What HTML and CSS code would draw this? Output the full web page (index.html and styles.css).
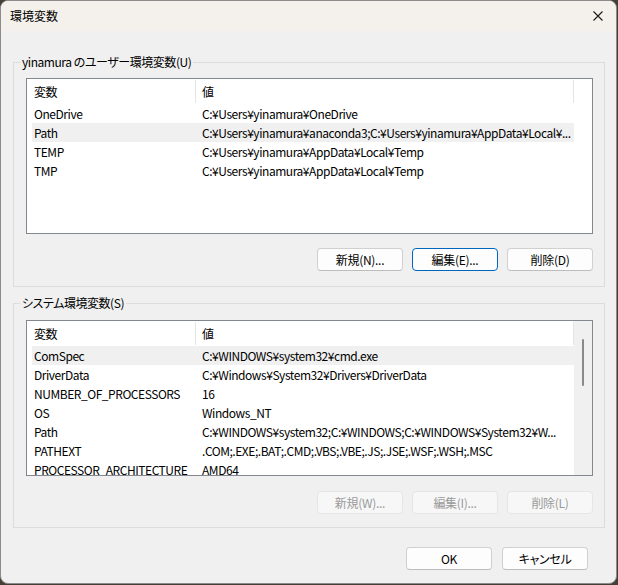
FILE: index.html
```html
<!DOCTYPE html>
<html lang="ja">
<head>
  <meta charset="UTF-8">
  <title>環境変数</title>
  <link rel="stylesheet" href="styles.css">
</head>
<body>
  <div class="env-window">
    <!-- Title bar -->
    <div class="env-titlebar">
      <span class="env-title">環境変数</span>
      <button class="env-close" aria-label="閉じる">
        <svg width="10" height="10" viewBox="0 0 10 10"><path d="M0.5 0.5 L9.5 9.5 M9.5 0.5 L0.5 9.5" stroke="#1a1a1a" stroke-width="1.1" fill="none"/></svg>
      </button>
    </div>

    <div class="env-body">
      <!-- User variables -->
      <fieldset class="env-group env-group-user">
        <legend>yinamura のユーザー環境変数(U)</legend>
        <div class="env-list env-list-user">
          <div class="env-rows">
            <div class="env-head">
              <div class="env-cell env-name">変数</div>
              <div class="env-cell env-value">値</div>
            </div>
            <div class="env-row"><div class="env-cell env-name">OneDrive</div><div class="env-cell env-value">C:¥Users¥yinamura¥OneDrive</div></div>
            <div class="env-row selected"><div class="env-cell env-name">Path</div><div class="env-cell env-value">C:¥Users¥yinamura¥anaconda3;C:¥Users¥yinamura¥AppData¥Local¥...</div></div>
            <div class="env-row"><div class="env-cell env-name">TEMP</div><div class="env-cell env-value">C:¥Users¥yinamura¥AppData¥Local¥Temp</div></div>
            <div class="env-row"><div class="env-cell env-name">TMP</div><div class="env-cell env-value">C:¥Users¥yinamura¥AppData¥Local¥Temp</div></div>
          </div>
          <div class="env-scroll-space"></div>
        </div>
        <div class="env-actions">
          <button class="env-btn">新規(N)...</button>
          <button class="env-btn focused">編集(E)...</button>
          <button class="env-btn">削除(D)</button>
        </div>
      </fieldset>

      <!-- System variables -->
      <fieldset class="env-group env-group-system">
        <legend>システム環境変数(S)</legend>
        <div class="env-list env-list-system">
          <div class="env-rows">
            <div class="env-head">
              <div class="env-cell env-name">変数</div>
              <div class="env-cell env-value">値</div>
            </div>
            <div class="env-row selected"><div class="env-cell env-name">ComSpec</div><div class="env-cell env-value">C:¥WINDOWS¥system32¥cmd.exe</div></div>
            <div class="env-row"><div class="env-cell env-name">DriverData</div><div class="env-cell env-value">C:¥Windows¥System32¥Drivers¥DriverData</div></div>
            <div class="env-row"><div class="env-cell env-name">NUMBER_OF_PROCESSORS</div><div class="env-cell env-value">16</div></div>
            <div class="env-row"><div class="env-cell env-name">OS</div><div class="env-cell env-value">Windows_NT</div></div>
            <div class="env-row"><div class="env-cell env-name">Path</div><div class="env-cell env-value">C:¥WINDOWS¥system32;C:¥WINDOWS;C:¥WINDOWS¥System32¥W...</div></div>
            <div class="env-row"><div class="env-cell env-name">PATHEXT</div><div class="env-cell env-value">.COM;.EXE;.BAT;.CMD;.VBS;.VBE;.JS;.JSE;.WSF;.WSH;.MSC</div></div>
            <div class="env-row"><div class="env-cell env-name">PROCESSOR_ARCHITECTURE</div><div class="env-cell env-value">AMD64</div></div>
          </div>
          <div class="env-scrollbar"><div class="env-thumb"></div></div>
        </div>
        <div class="env-actions">
          <button class="env-btn" disabled>新規(W)...</button>
          <button class="env-btn" disabled>編集(I)...</button>
          <button class="env-btn" disabled>削除(L)</button>
        </div>
      </fieldset>

      <!-- Dialog buttons -->
      <div class="env-footer">
        <button class="env-btn">OK</button>
        <button class="env-btn">キャンセル</button>
      </div>
    </div>
  </div>
</body>
</html>
```

FILE: styles.css
```css
/* Page / desktop behind the dialog */
html, body {
  margin: 0;
  padding: 0;
}

body {
  width: 618px;
  height: 585px;
  background: #463f37;
  font-family: "Noto Sans CJK JP", "Noto Sans", sans-serif;
  font-size: 12px;
  font-feature-settings: "palt";
  letter-spacing: -0.45px;
  color: #000;
  overflow: hidden;
}

/* Dialog window */
.env-window {
  box-sizing: border-box;
  width: 617px;
  height: 584px;
  border: 1px solid #8c8c8c;
  border-radius: 8px;
  background: #f0f0f0;
  overflow: hidden;
  display: flex;
  flex-direction: column;
}

/* Title bar */
.env-titlebar {
  height: 30px;
  flex: none;
  background: #f4f1ec;
  display: flex;
  align-items: center;
  justify-content: space-between;
  padding: 0 10px 0 9px;
}

.env-title {
  line-height: 16px;
  font-feature-settings: normal;
  letter-spacing: 0;
}

.env-close {
  border: none;
  background: none;
  padding: 0;
  width: 10px;
  height: 10px;
  margin-right: 3px;
  display: flex;
}

.env-body {
  padding: 0 11px 0 12px;
}

/* Group boxes */
.env-group {
  margin: 0;
  border: 1px solid #dcdcdc;
  padding: 0 11px 15px 12px;
}

.env-group legend {
  margin-left: -6px;
  padding: 0 2px;
  line-height: 16px;
}

.env-group-user {
  margin-top: 23px;
}

.env-group-system {
  margin-top: 8px;
  padding-bottom: 13px;
}

/* List views */
.env-list {
  box-sizing: border-box;
  border: 1px solid #828790;
  background: #fff;
  display: grid;
  grid-template-columns: 1fr 18px;
  overflow: hidden;
}

.env-list-user {
  margin-top: 8px;
  height: 156px;
}

.env-list-system {
  margin-top: 9px;
  height: 156px;
}

.env-rows {
  padding-left: 5px;
  overflow: hidden;
}

.env-head,
.env-row {
  display: grid;
  grid-template-columns: 164px 1fr;
}

.env-head {
  padding: 1px 0;
}

.env-head .env-cell {
  height: 23px;
  line-height: 23px;
  border-right: 1px solid #e5e5e5;
}

.env-row {
  height: 19px;
  line-height: 19px;
}

.env-row.selected {
  background: #f0f0f0;
}

.env-cell {
  white-space: nowrap;
  overflow: hidden;
  box-sizing: border-box;
}

.env-name {
  padding-left: 2px;
}

.env-value {
  padding-left: 6px;
}

/* Vertical scrollbar (system list) */
.env-scrollbar {
  background: #f0f0f0;
  position: relative;
}

.env-thumb {
  position: absolute;
  left: 8px;
  top: 18px;
  width: 2px;
  height: 47px;
  border-radius: 1px;
  background: #8a8a8a;
}

/* Buttons */
.env-actions {
  display: flex;
  justify-content: flex-end;
  gap: 9px;
  margin-top: 14px;
}

.env-group-system .env-actions {
  margin-top: 15px;
}

.env-btn {
  box-sizing: border-box;
  width: 86px;
  height: 23px;
  padding: 0;
  font-family: inherit;
  font-size: 12px;
  font-feature-settings: "palt";
  letter-spacing: -0.3px;
  color: #000;
  background: #fdfdfd;
  border: 1px solid #d0d0d0;
  border-bottom-color: #bdbdbd;
  border-radius: 4px;
}

.env-btn.focused {
  border: 1px solid #0067c0;
}

.env-btn:disabled {
  background: #f7f7f7;
  border-color: #e5e5e5;
  color: #9a9a9a;
}

.env-footer {
  display: flex;
  justify-content: flex-end;
  gap: 10px;
  margin-top: 19px;
  padding-right: 17px;
}
```
